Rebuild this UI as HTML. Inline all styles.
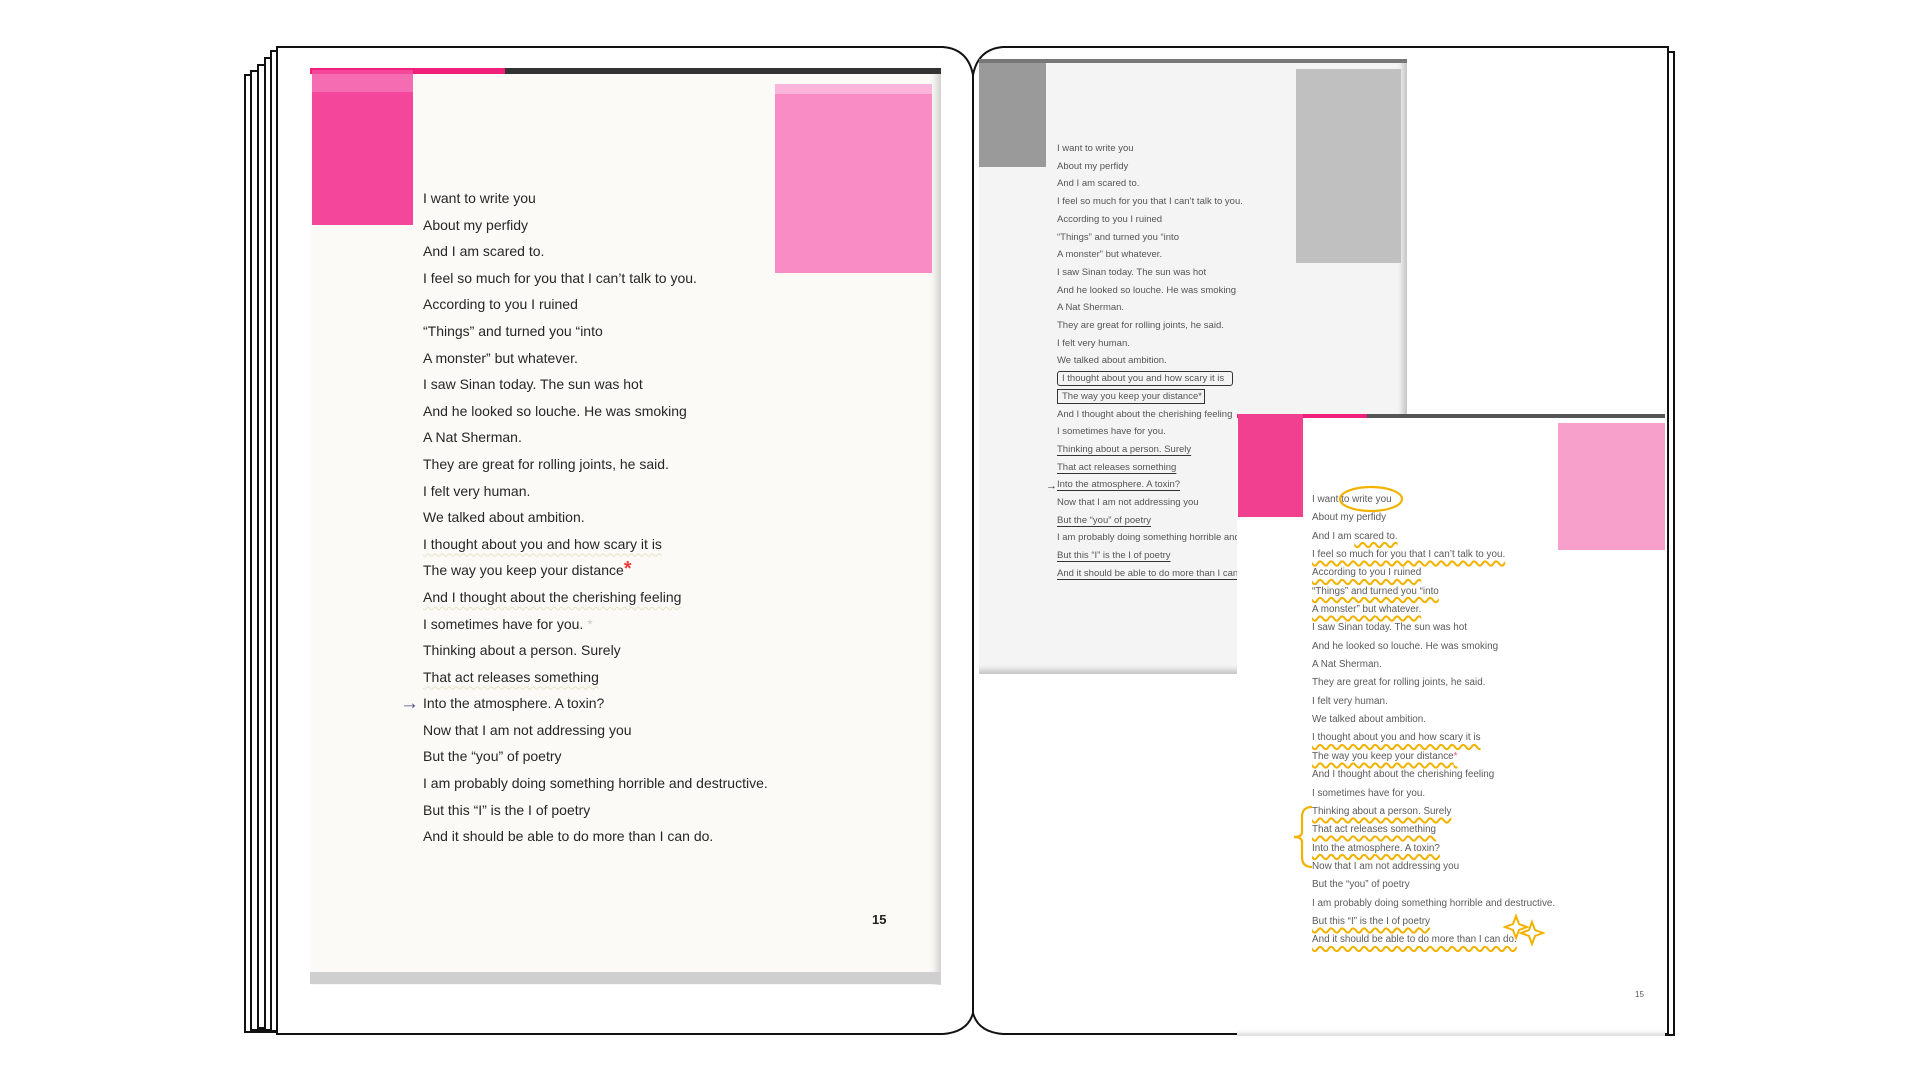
<!DOCTYPE html>
<html><head><meta charset="utf-8">
<style>
*{margin:0;padding:0;box-sizing:border-box}
html,body{width:1920px;height:1080px;background:#fff;overflow:hidden;position:relative;font-family:"Liberation Sans",Arial,sans-serif}
.abs{position:absolute}
.lines div{white-space:nowrap}
.L{left:423px;top:185px;font-size:14px;line-height:26.6px;color:#262626}
.G{left:1057px;top:140px;font-size:9.5px;line-height:17.7px;color:#555}
.C{left:1312px;top:491px;font-size:9.9px;line-height:18.35px;color:#5a5a5a}
.wy{text-decoration:underline wavy #f2b200;text-decoration-thickness:2px;text-underline-offset:3px}
.wf{text-decoration:underline wavy #e6e2c8;text-decoration-thickness:1px;text-underline-offset:4px}
.ul{text-decoration:underline #333;text-underline-offset:3px}
</style></head><body>

<svg class="abs" style="left:0;top:0" width="1920" height="1080">
 <g fill="#fff" stroke="#111" stroke-width="2">
  <rect x="245" y="75" width="300" height="957"/>
  <rect x="251" y="71" width="300" height="959"/>
  <rect x="258" y="65" width="300" height="963"/>
  <rect x="265" y="58" width="300" height="972"/>
  <rect x="271" y="51" width="300" height="980"/>
  <rect x="1400" y="52" width="274" height="983"/>
 </g>
 <path d="M277,1034 L277,47 L943,47 Q968,49 973,75 Q978,49 1003,47 L1668,47 L1668,1034 L1003,1034 Q978,1032 973,1013 Q968,1032 943,1034 Z" fill="#fff" stroke="#111" stroke-width="2"/>
 <line x1="973" y1="75" x2="973" y2="1013" stroke="#111" stroke-width="2"/>
</svg>

<!-- left scan page -->
<div class="abs" style="left:310px;top:68px;width:631px;height:917px;background:#fbfaf6;box-shadow:inset -10px 0 8px -6px #ccc"></div>
<div class="abs" style="left:310px;top:68px;width:631px;height:6px;background:#333"></div>
<div class="abs" style="left:310px;top:68px;width:195px;height:6px;background:#f0207a"></div>
<div class="abs" style="left:310px;top:972px;width:631px;height:12px;background:#cfcfcf"></div>
<div class="abs" style="left:312px;top:70px;width:101px;height:155px;background:#f4469a"></div>
<div class="abs" style="left:312px;top:74px;width:101px;height:18px;background:#f56cb2"></div>
<div class="abs" style="left:775px;top:84px;width:157px;height:189px;background:#f98cc5"></div>
<div class="abs" style="left:775px;top:84px;width:157px;height:10px;background:#fbb5dc"></div>

<div class="abs lines L">
<div>I want to write you</div><div>About my perfidy</div><div>And I am scared to.</div>
<div>I feel so much for you that I can’t talk to you.</div><div>According to you I ruined</div>
<div>“Things” and turned you “into</div><div>A monster” but whatever.</div>
<div>I saw Sinan today. The sun was hot</div><div>And he looked so louche. He was smoking</div>
<div>A Nat Sherman.</div><div>They are great for rolling joints, he said.</div><div>I felt very human.</div>
<div>We talked about ambition.</div><div><span class="wf">I thought about you and how scary it is</span></div>
<div>The way you keep your distance<span style="color:#f03c3c;font-weight:bold;font-size:20px;line-height:10px">*</span></div>
<div><span class="wf">And I thought about the cherishing feeling</span></div>
<div>I sometimes have for you. <span style="color:#ccc">*</span></div>
<div>Thinking about a person. Surely</div><div><span class="wf">That act releases something</span></div>
<div>Into the atmosphere. A toxin?</div><div>Now that I am not addressing you</div>
<div>But the “you” of poetry</div><div>I am probably doing something horrible and destructive.</div>
<div>But this “I” is the I of poetry</div><div>And it should be able to do more than I can do.</div>
</div>
<div class="abs" style="left:400px;top:691px;font-size:19px;font-weight:bold;color:#4a4a8a;line-height:26px">→</div>
<div class="abs" style="left:872px;top:912px;font-size:13px;font-weight:bold;color:#222">15</div>

<!-- gray scan -->
<div class="abs" style="left:979px;top:59px;width:428px;height:615px;background:#f4f4f4;box-shadow:inset -8px -8px 6px -4px #c4c4c4"></div>
<div class="abs" style="left:979px;top:59px;width:428px;height:4px;background:#777"></div>
<div class="abs" style="left:979px;top:63px;width:67px;height:104px;background:#9a9a9a"></div>
<div class="abs" style="left:1296px;top:69px;width:105px;height:194px;background:#c0c0c0"></div>
<div class="abs lines G">
<div>I want to write you</div><div>About my perfidy</div><div>And I am scared to.</div>
<div>I feel so much for you that I can’t talk to you.</div><div>According to you I ruined</div>
<div>“Things” and turned you “into</div><div>A monster” but whatever.</div>
<div>I saw Sinan today. The sun was hot</div><div>And he looked so louche. He was smoking</div>
<div>A Nat Sherman.</div><div>They are great for rolling joints, he said.</div><div>I felt very human.</div>
<div>We talked about ambition.</div>
<div><span style="border:1.5px solid #333;border-radius:3px;padding:1px 8px 1px 4px">I thought about you and how scary it is</span></div>
<div><span style="border:1.5px solid #333;padding:1px 2px 1px 4px">The way you keep your distance*</span></div>
<div>And I thought about the cherishing feeling</div><div>I sometimes have for you.</div>
<div class="ul">Thinking about a person. Surely</div><div class="ul">That act releases something</div>
<div class="ul">Into the atmosphere. A toxin?</div><div>Now that I am not addressing you</div>
<div class="ul">But the “you” of poetry</div><div>I am probably doing something horrible and destructive.</div>
<div class="ul">But this “I” is the I of poetry</div><div class="ul">And it should be able to do more than I can do.</div>
</div>
<div class="abs" style="left:1046px;top:480px;font-size:11px;color:#333">→</div>

<!-- colour scan -->
<div class="abs" style="left:1237px;top:414px;width:428px;height:622px;background:#fff;box-shadow:inset 0 -6px 4px -3px #ddd"></div>
<div class="abs" style="left:1237px;top:414px;width:428px;height:4px;background:#555"></div>
<div class="abs" style="left:1237px;top:414px;width:130px;height:4px;background:#f0207a"></div>
<div class="abs" style="left:1238px;top:414px;width:65px;height:103px;background:#f0408f"></div>
<div class="abs" style="left:1558px;top:423px;width:107px;height:127px;background:#f7a0cc"></div>
<div class="abs lines C">
<div>I want to write you</div><div>About my perfidy</div><div>And I am <span class="wy">scared to.</span></div>
<div class="wy">I feel so much for you that I can’t talk to you.</div><div class="wy">According to you I ruined</div>
<div class="wy">“Things” and turned you “into</div><div class="wy">A monster” but whatever.</div>
<div>I saw Sinan today. The sun was hot</div><div>And he looked so louche. He was smoking</div>
<div>A Nat Sherman.</div><div>They are great for rolling joints, he said.</div><div>I felt very human.</div>
<div>We talked about ambition.</div><div class="wy">I thought about you and how scary it is</div>
<div class="wy">The way you keep your distance<span style="color:#f05070">*</span></div>
<div>And I thought about the cherishing feeling</div><div>I sometimes have for you.</div>
<div class="wy">Thinking about a person. Surely</div><div class="wy">That act releases something</div>
<div class="wy">Into the atmosphere. A toxin?</div><div>Now that I am not addressing you</div>
<div>But the “you” of poetry</div><div>I am probably doing something horrible and destructive.</div>
<div class="wy">But this “I” is the I of poetry</div><div class="wy">And it should be able to do more than I can do.</div>
</div>
<svg class="abs" style="left:1290px;top:480px" width="400" height="480">
 <ellipse cx="81" cy="19" rx="31" ry="12" fill="none" stroke="#f2b200" stroke-width="2.2"/>
 <path d="M22,327 Q12,327 12,337 L12,352 Q12,357 4,357 Q12,357 12,362 L12,377 Q12,387 22,387" fill="none" stroke="#f2b200" stroke-width="2.2"/>
 <path d="M226,436 l3,8 8,3 -8,3 -3,8 -3,-8 -8,-3 8,-3z M242,442 l3,8 8,3 -8,3 -3,8 -3,-8 -8,-3 8,-3z" fill="none" stroke="#f2b200" stroke-width="2"/>
</svg>
<div class="abs" style="left:1635px;top:990px;font-size:8px;color:#555">15</div>

</body></html>
